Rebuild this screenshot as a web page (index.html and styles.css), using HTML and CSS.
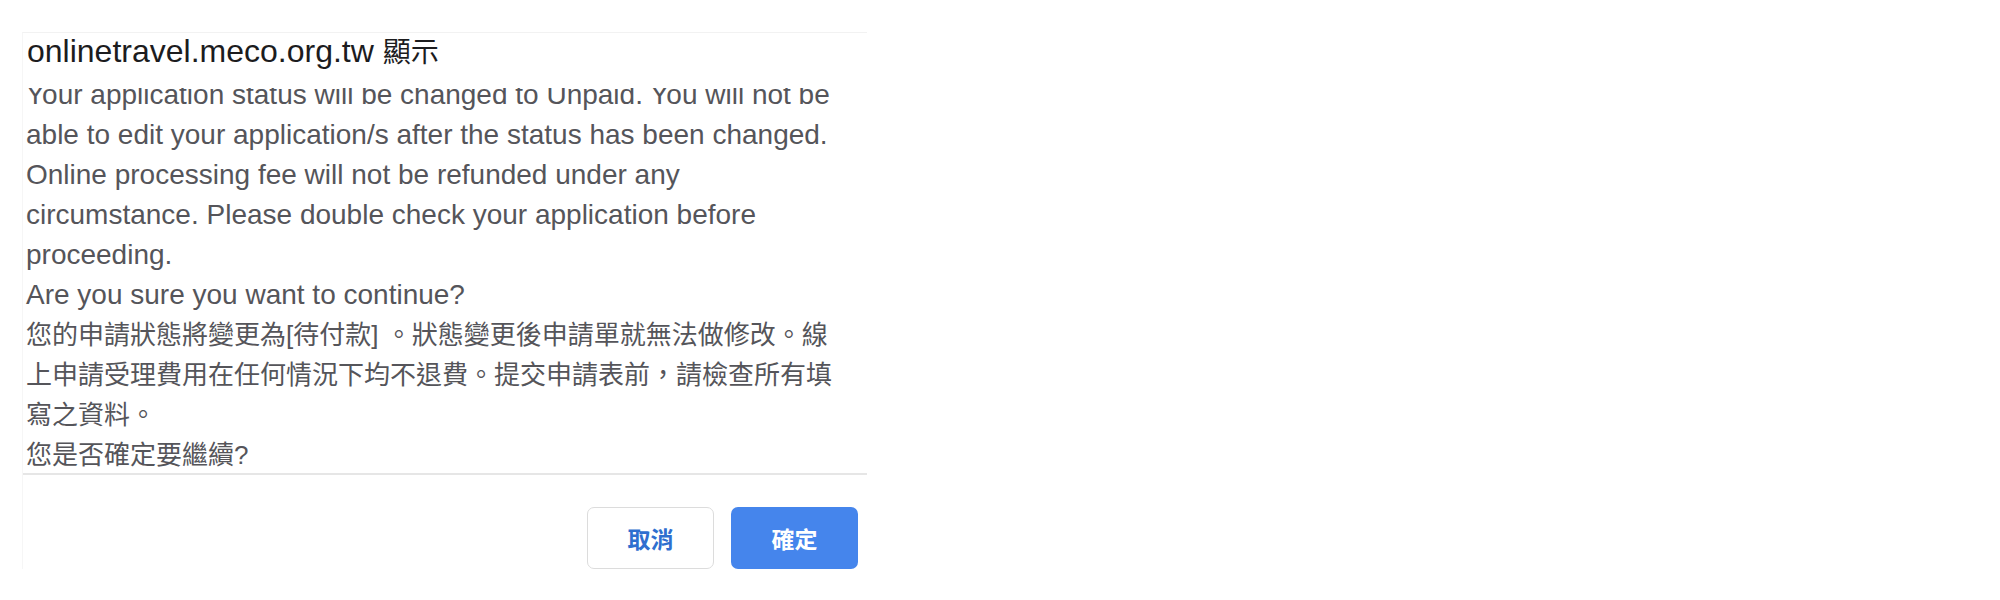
FILE: index.html
```html
<!DOCTYPE html>
<html lang="zh-Hant">
<head>
  <meta charset="UTF-8" />
  <title>onlinetravel.meco.org.tw 顯示</title>
  <link rel="stylesheet" href="styles.css">
</head>
<body>
  <div class="dialog">
    <h1 class="dialog-title">onlinetravel.meco.org.tw <span class="title-cjk">顯示</span></h1>

    <div class="message-box">
      <div class="message">
        <p class="en">Your application status will be changed to Unpaid. You will not be able to edit your application/s after the status has been changed. Online processing fee will not be refunded under any circumstance. Please double check your application before proceeding.</p>
        <p class="en">Are you sure you want to continue?</p>
        <p class="zh">您的申請狀態將變更為[待付款] 。狀態變更後申請單就無法做修改。線上申請受理費用在任何情況下均不退費。提交申請表前，請檢查所有填寫之資料。</p>
        <p class="zh">您是否確定要繼續?</p>
      </div>
    </div>

    <div class="dialog-buttons">
      <button class="btn btn-cancel">取消</button>
      <button class="btn btn-ok">確定</button>
    </div>
  </div>
</body>
</html>
```

FILE: styles.css
```css
body {
  margin: 0;
  background: #fff;
  font-family: 'Liberation Sans', 'Noto Sans CJK TC', sans-serif;
}
.dialog {
  margin: 32px 0 0 22px;
  width: 844px;
  border-top: 1px solid #f2f2f2;
  border-left: 1px solid #f6f6f6;
}
.dialog-title {
  margin: 0;
  padding-left: 4px;
  font-size: 32px;
  font-weight: normal;
  line-height: 36px;
  color: #1c1c1e;
}
.title-cjk {
  font-size: 28px;
}
.message-box {
  margin-top: 17px;
  height: 385px;
  overflow: hidden;
  border-bottom: 2px solid #e6e6e6;
}
.message {
  margin-top: -13px;
  padding-left: 3px;
  width: 818px;
  color: #55555a;
  line-height: 40px;
}
.message p {
  margin: 0;
}
.en {
  font-size: 28px;
}
.zh {
  font-size: 26px;
}
.dialog-buttons {
  display: flex;
  justify-content: flex-end;
  gap: 17px;
  padding: 32px 9px 0 0;
}
.btn {
  width: 127px;
  height: 62px;
  border-radius: 7px;
  font-family: 'Noto Sans CJK TC', sans-serif;
  font-size: 23px;
  font-weight: bold;
  cursor: pointer;
}
.btn-cancel {
  background: #fff;
  border: 1px solid #dcdcdc;
  color: #2f6fcf;
}
.btn-ok {
  background: #4585ec;
  border: none;
  color: #fff;
}
```
